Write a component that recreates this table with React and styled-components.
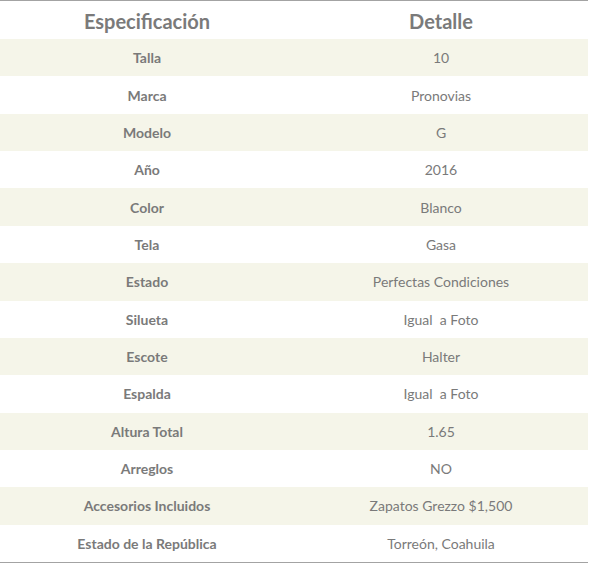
import React from 'react';
import styled, { createGlobalStyle } from 'styled-components';

const GlobalStyle = createGlobalStyle`
  body {
    margin: 0;
    background: #fff;
    font-family: Lato, "Open Sans", Arial, sans-serif;
  }
`;

const Table = styled.div`
  width: 588px;
  border-top: 1px solid #a3a3a3;
  border-bottom: 1px solid #a3a3a3;
`;

const Row = styled.div`
  display: grid;
  grid-template-columns: 1fr 1fr;
  align-items: center;
  height: ${(p) => (p.$head ? '38px' : '37.36px')};
  background: ${(p) => (p.$striped ? '#f5f5e9' : '#fff')};
`;

const HeadCell = styled.div`
  text-align: center;
  font-size: 20px;
  font-weight: 700;
  color: #7a7a7a;
  padding-top: 2px;
`;

const Label = styled.div`
  text-align: center;
  font-size: 14px;
  font-weight: 700;
  color: #7a7a7a;
`;

const Value = styled.div`
  text-align: center;
  font-size: 14px;
  color: #7a7a7a;
  white-space: pre;
`;

const specs = [
  ['Talla', '10'],
  ['Marca', 'Pronovias'],
  ['Modelo', 'G'],
  ['Año', '2016'],
  ['Color', 'Blanco'],
  ['Tela', 'Gasa'],
  ['Estado', 'Perfectas Condiciones'],
  ['Silueta', 'Igual  a Foto'],
  ['Escote', 'Halter'],
  ['Espalda', 'Igual  a Foto'],
  ['Altura Total', '1.65'],
  ['Arreglos', 'NO'],
  ['Accesorios Incluidos', 'Zapatos Grezzo $1,500'],
  ['Estado de la República', 'Torreón, Coahuila'],
];

const App = () => (
  <>
    <GlobalStyle />
    <Table>
      <Row $head>
        <HeadCell>Especificación</HeadCell>
        <HeadCell>Detalle</HeadCell>
      </Row>
      {specs.map(([label, value], i) => (
        <Row key={label} $striped={i % 2 === 0}>
          <Label>{label}</Label>
          <Value>{value}</Value>
        </Row>
      ))}
    </Table>
  </>
);

export default App;
